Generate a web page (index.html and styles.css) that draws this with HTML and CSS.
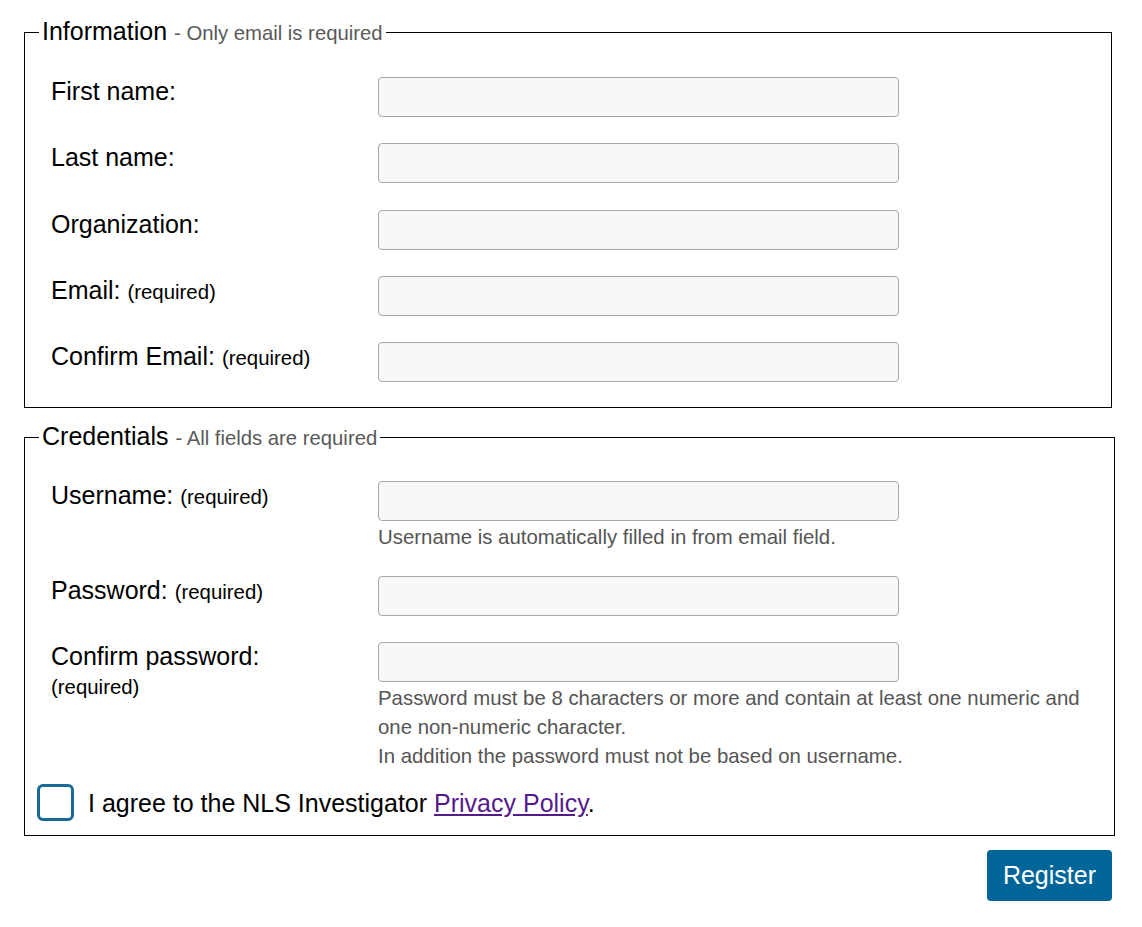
FILE: index.html
```html
<!DOCTYPE html>
<html lang="en">
<head>
<meta charset="utf-8">
<title>Register</title>
<link rel="stylesheet" href="styles.css">
</head>
<body>
<form class="page">
  <fieldset class="group group-first">
    <legend class="group-title">Information <span class="group-note">- Only email is required</span></legend>
    <div class="fields">
      <div class="field">
        <label class="field-label">First name:</label>
        <div class="field-control"><input class="text-input" type="text"></div>
      </div>
      <div class="field">
        <label class="field-label">Last name:</label>
        <div class="field-control"><input class="text-input" type="text"></div>
      </div>
      <div class="field">
        <label class="field-label">Organization:</label>
        <div class="field-control"><input class="text-input" type="text"></div>
      </div>
      <div class="field">
        <label class="field-label">Email: <span class="req">(required)</span></label>
        <div class="field-control"><input class="text-input" type="text"></div>
      </div>
      <div class="field">
        <label class="field-label">Confirm Email: <span class="req">(required)</span></label>
        <div class="field-control"><input class="text-input" type="text"></div>
      </div>
    </div>
  </fieldset>

  <fieldset class="group group-second">
    <legend class="group-title">Credentials <span class="group-note">- All fields are required</span></legend>
    <div class="fields fields-tight">
      <div class="field">
        <label class="field-label">Username: <span class="req">(required)</span></label>
        <div class="field-control">
          <input class="text-input" type="text">
          <p class="hint">Username is automatically filled in from email field.</p>
        </div>
      </div>
      <div class="field">
        <label class="field-label">Password: <span class="req">(required)</span></label>
        <div class="field-control"><input class="text-input" type="password"></div>
      </div>
      <div class="field">
        <label class="field-label">Confirm password: <span class="req">(required)</span></label>
        <div class="field-control">
          <input class="text-input" type="password">
          <p class="hint">Password must be 8 characters or more and contain at least one numeric and one non-numeric character.<br>In addition the password must not be based on username.</p>
        </div>
      </div>
    </div>
    <label class="agree">
      <input class="agree-box" type="checkbox">
      <span>I agree to the NLS Investigator <a class="policy-link" href="#policy">Privacy Policy</a>.</span>
    </label>
  </fieldset>

  <div class="actions">
    <button class="register-btn" type="button">Register</button>
  </div>
</form>
</body>
</html>
```

FILE: styles.css
```css
html, body {
  margin: 0;
  padding: 0;
  background: #ffffff;
}

body {
  font-family: "Liberation Sans", Arial, sans-serif;
  color: #000000;
}

.page {
  padding: 17px 30px 0 24px;
}

.group {
  margin: 0;
  padding: 30px 14px 25px 14px;
  border: 1px solid #000000;
  min-width: 0;
}

.group-second {
  margin-top: 14px;
  margin-right: -3px;
  padding-top: 29px;
  padding-bottom: 14px;
}

.group-title {
  padding: 0 3px;
  font-size: 25px;
  line-height: 28px;
  color: #000000;
}

.group-note {
  font-size: 20.3px;
  color: #595959;
}

.fields {
  display: flex;
  flex-direction: column;
  gap: 26.25px;
  padding-left: 12px;
}

.fields-tight {
  gap: 26px;
}

.field {
  display: grid;
  grid-template-columns: 280px 1fr;
  column-gap: 47px;
  align-items: start;
}

.field-label {
  font-size: 25px;
  line-height: 29px;
}

.req {
  font-size: 20.4px;
}

.field-control {
  display: flex;
  flex-direction: column;
  align-items: flex-start;
}

.text-input {
  box-sizing: border-box;
  width: 521px;
  height: 40px;
  margin: 0;
  padding: 4px 10px;
  border: 1px solid #a8a8a8;
  border-radius: 4px;
  background: #f8f8f8;
  font-family: inherit;
  font-size: 20px;
}

.hint {
  margin: 2px 0 -2px;
  font-size: 20.4px;
  line-height: 29px;
  color: #555555;
}

.agree {
  display: flex;
  align-items: center;
  gap: 14px;
  margin-top: 15px;
  margin-left: -2px;
  font-size: 25px;
  line-height: 28px;
}

.agree-box {
  appearance: none;
  -webkit-appearance: none;
  box-sizing: border-box;
  width: 37px;
  height: 37px;
  margin: 0;
  border: 3px solid #1a6a98;
  border-radius: 6px;
  background: #ffffff;
}

.policy-link {
  color: #551a8b;
  text-decoration: underline;
}

.actions {
  display: flex;
  justify-content: flex-end;
  margin-top: 14px;
}

.register-btn {
  margin: 0;
  padding: 11px 16px;
  border: none;
  border-radius: 4px;
  background: #006699;
  color: #ffffff;
  font-family: inherit;
  font-size: 25px;
  line-height: 29px;
}
```
